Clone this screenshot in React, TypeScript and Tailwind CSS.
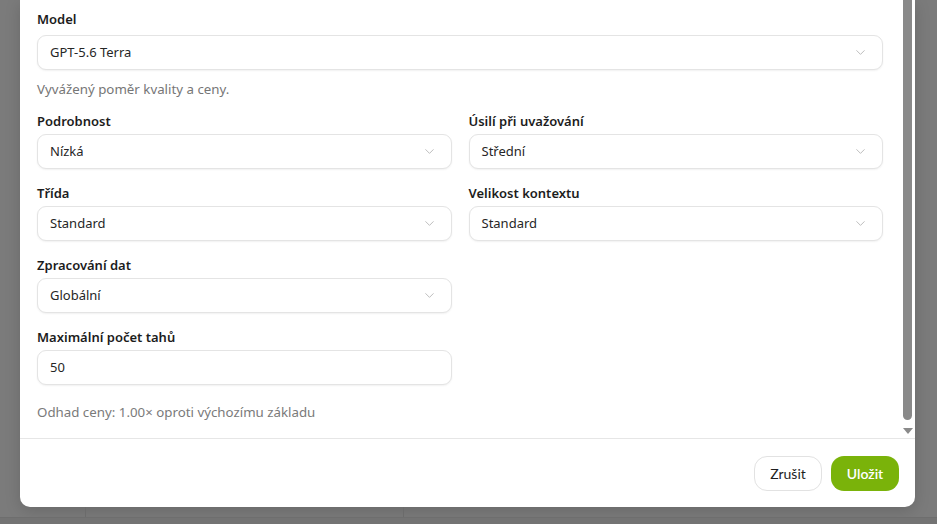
import React from 'react';
import { ChevronDown } from 'lucide-react';

type Field = {
  label: string;
  value: string;
  select?: boolean;
  gap?: string;
};

const SelectBox: React.FC<{ value: string; select?: boolean }> = ({ value, select = true }) => (
  <div className="flex h-[35px] items-center justify-between rounded-[9px] border border-[#e4e4e4] bg-white pl-[12px] pr-[14px] text-[13px] text-[#262626] shadow-[0_1px_2px_rgba(0,0,0,0.06)]">
    <span>{value}</span>
    {select && <ChevronDown className="h-[15px] w-[15px] text-[#b3b3b3]" strokeWidth={1.4} />}
  </div>
);

const FormField: React.FC<Field> = ({ label, value, select, gap = 'mb-[3px]' }) => (
  <div className="flex flex-col">
    <label className={`${gap} h-[20px] text-[13px] font-semibold leading-[20px] text-[#1c1c1c]`}>{label}</label>
    <SelectBox value={value} select={select} />
  </div>
);

const App: React.FC = () => {
  return (
    <div className="h-[524px] w-[937px] overflow-hidden bg-[#7b7b7b] font-['Noto_Sans',sans-serif]">
      {/* dialog */}
      <div className="ml-[20px] flex w-[895px] flex-col rounded-b-[10px] bg-white shadow-[0_4px_16px_rgba(0,0,0,0.15)]">
        <div className="flex h-[438px]">
          <div className="flex-1 px-[17px] pt-[9px]">
            <FormField label="Model" value="GPT-5.6 Terra" gap="mb-[6px]" />
            <p className="mt-[9px] h-[20px] text-[13.3px] leading-[20px] text-[#767676]">Vyvážený poměr kvality a ceny.</p>

            <div className="mt-[12px] grid grid-cols-2 gap-x-[17px] gap-y-[14px]">
              <FormField label="Podrobnost" value="Nízká" />
              <FormField label="Úsilí při uvažování" value="Střední" />
              <FormField label="Třída" value="Standard" />
              <FormField label="Velikost kontextu" value="Standard" />
              <FormField label="Zpracování dat" value="Globální" />
              <div />
              <FormField label="Maximální počet tahů" value="50" select={false} />
            </div>

            <p className="mt-[17px] text-[13.3px] leading-[20px] text-[#7a7a7a]">Odhad ceny: 1.00× oproti výchozímu základu</p>
          </div>

          {/* scrollbar */}
          <div className="flex w-[15px] flex-col items-center">
            <div className="mb-[3px] w-[9px] flex-1 rounded-b-[5px] bg-[#898989]" />
            <div className="flex h-[15px] items-center justify-center">
              <div className="h-0 w-0 border-x-[5px] border-t-[6px] border-x-transparent border-t-[#8a8a8a]" />
            </div>
          </div>
        </div>

        <div className="flex h-[69px] items-center justify-end gap-[9px] border-t border-[#e6e6e6] pr-[16px]">
          <button className="h-[35px] w-[68px] rounded-[13px] border border-[#e2e2e2] bg-white font-['Lato',sans-serif] text-[14px] text-[#1e1e1e]">
            Zrušit
          </button>
          <button className="h-[35px] w-[68px] rounded-[13px] bg-[#7ab30a] font-['Lato',sans-serif] text-[14px] font-semibold text-white">
            Uložit
          </button>
        </div>
      </div>

      {/* page underneath */}
      <div className="ml-[85px] h-[10px] w-[319px] border-x border-[#6b6b6b]" />
      <div className="h-[7px] border-t border-[#6e6e6e] bg-[#737373]" />
    </div>
  );
};

export default App;
